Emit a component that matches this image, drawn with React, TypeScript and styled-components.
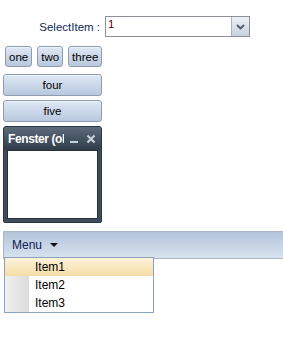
import React from "react";
import styled, { createGlobalStyle } from "styled-components";

const Global = createGlobalStyle`
  html, body { margin: 0; padding: 0; background: #fff; }
  body { font-family: "Liberation Sans", Arial, sans-serif; font-size: 11px; color: #000; }
`;

const Page = styled.div`
  display: flex;
  flex-direction: column;
  padding-top: 16px;
`;

const SelectRow = styled.div`
  display: flex;
  align-items: center;
  gap: 5px;
`;

const Label = styled.span`
  width: 100px;
  text-align: right;
  color: #0e2a55;
  font-size: 11.5px;
`;

const SelectBox = styled.div`
  display: flex;
  width: 145px;
  height: 21px;
  box-sizing: border-box;
  border: 1px solid #8a8f99;
  background: #fff;
`;

const SelectValue = styled.div`
  flex: 1;
  padding: 1px 2px;
  color: #5a0000;
  font-size: 11.5px;
`;

const SelectArrow = styled.div`
  width: 17px;
  border-left: 1px solid #a9b4c2;
  background: linear-gradient(#eef1f6, #c8d1de);
  display: flex;
  align-items: center;
  justify-content: center;
`;

const ButtonRow = styled.div`
  display: flex;
  gap: 5px;
  padding-left: 5px;
  margin-top: 9px;
`;

const Btn = styled.button<{ $wide?: boolean }>`
  font-family: "Liberation Sans", Arial, sans-serif;
  font-size: 11.5px;
  color: #000;
  height: ${p => (p.$wide ? 22 : 21)}px;
  width: ${p => (p.$wide ? "99px" : "auto")};
  padding: 0 ${p => (p.$wide ? 0 : 3)}px;
  margin: 0;
  border: 1px solid #8f9cb0;
  border-radius: 3px;
  background: linear-gradient(#dfe8f4, #b8c8de);
  box-shadow: inset 0 1px 0 #eef3fa;
`;

const Stack = styled.div`
  display: flex;
  flex-direction: column;
  gap: 4px;
  padding-left: 3px;
  margin-top: 7px;
`;

const Win = styled.div`
  margin: 4px 0 0 3px;
  width: 99px;
  height: 97px;
  box-sizing: border-box;
  border: 1px solid #2c3744;
  border-radius: 3px 3px 2px 2px;
  background: #3f4d5b;
  display: flex;
  flex-direction: column;
  padding: 0 3px 3px 3px;
`;

const WinTitle = styled.div`
  height: 23px;
  display: flex;
  align-items: center;
  color: #fff;
  font-weight: bold;
  font-size: 12px;
  letter-spacing: -0.4px;
  background: linear-gradient(#5d6b7a, #2f3b48);
  margin: 0 -3px;
  padding: 0 4px 0 4px;
  border-radius: 2px 2px 0 0;
`;

const WinTitleText = styled.span`
  flex: 1;
  min-width: 0;
  overflow: hidden;
  white-space: nowrap;
  text-overflow: clip;
`;

const WinIcons = styled.div`
  display: flex;
  flex-shrink: 0;
  gap: 8px;
  align-items: center;
  padding: 0 1px 0 6px;
`;

const WinBody = styled.div`
  flex: 1;
  background: #fff;
  border: 1px solid #24303c;
`;

const MenuBar = styled.div`
  margin: 8px 0 0 3px;
  height: 28px;
  box-sizing: border-box;
  border: 1px solid #a8b6c8;
  border-right: none;
  background: linear-gradient(#b3c4da, #d9e3ef);
  display: flex;
  align-items: center;
  padding-left: 8px;
  gap: 8px;
  color: #0e2050;
  font-size: 12px;
`;

const Popup = styled.div`
  margin: -2px 0 0 4px;
  width: 150px;
  box-sizing: border-box;
  border: 1px solid #8ba0bc;
  background: linear-gradient(90deg, #f1f1f1 0, #dcdcdc 24px, #fff 24px);
  display: flex;
  flex-direction: column;
`;

const Item = styled.div<{ $active?: boolean }>`
  height: 18px;
  display: flex;
  align-items: center;
  padding-left: 30px;
  font-size: 12px;
  color: #000;
  background: ${p => (p.$active ? "linear-gradient(#fdf3dc, #f5dca6)" : "transparent")};
`;

export default function App() {
  return (
    <>
      <Global />
      <Page>
        <SelectRow>
          <Label>SelectItem :</Label>
          <SelectBox>
            <SelectValue>1</SelectValue>
            <SelectArrow>
              <svg width="9" height="6" viewBox="0 0 9 6">
                <path d="M1 1 L4.5 4.5 L8 1" stroke="#4a5a70" strokeWidth="1.8" fill="none" />
              </svg>
            </SelectArrow>
          </SelectBox>
        </SelectRow>
        <ButtonRow>
          <Btn>one</Btn>
          <Btn>two</Btn>
          <Btn>three</Btn>
        </ButtonRow>
        <Stack>
          <Btn $wide>four</Btn>
          <Btn $wide>five</Btn>
        </Stack>
        <Win>
          <WinTitle>
            <WinTitleText>Fenster (ohne Titel)</WinTitleText>
            <WinIcons>
              <svg width="8" height="10" viewBox="0 0 8 10">
                <rect x="0" y="7" width="8" height="2" fill="#c7d0da" />
              </svg>
              <svg width="10" height="10" viewBox="0 0 10 10">
                <path d="M1.5 1.5 L8.5 8.5 M8.5 1.5 L1.5 8.5" stroke="#c7d0da" strokeWidth="2.2" />
              </svg>
            </WinIcons>
          </WinTitle>
          <WinBody />
        </Win>
        <MenuBar>
          <span>Menu</span>
          <svg width="8" height="5" viewBox="0 0 8 5">
            <path d="M0 0 H8 L4 4 Z" fill="#111" />
          </svg>
        </MenuBar>
        <Popup>
          <Item $active>Item1</Item>
          <Item>Item2</Item>
          <Item>Item3</Item>
        </Popup>
      </Page>
    </>
  );
}
